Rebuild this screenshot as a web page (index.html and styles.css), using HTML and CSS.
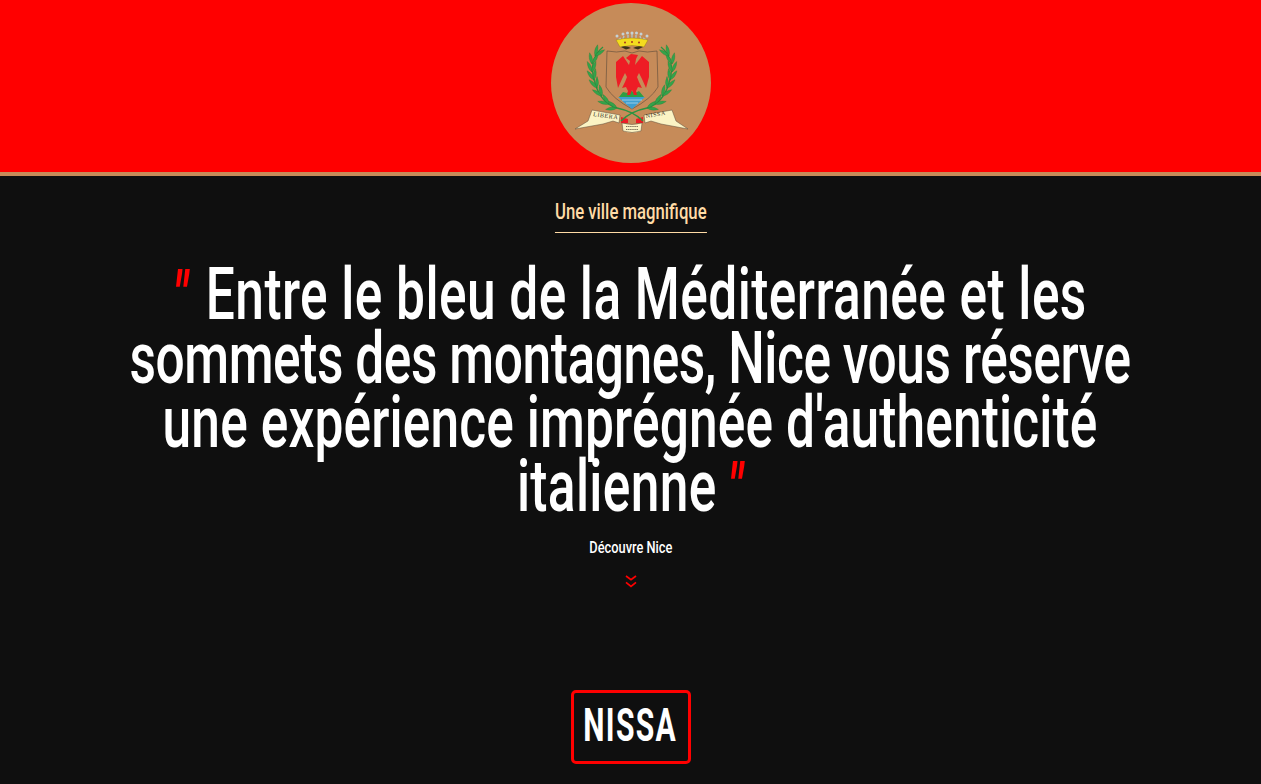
FILE: index.html
```html
<!DOCTYPE html>
<html lang="fr">
<head>
  <meta charset="UTF-8" />
  <meta name="viewport" content="width=device-width,initial-scale=1.0" />
  <title>Nissa</title>
  <link rel="stylesheet" href="styles.css">
</head>
<body>
  <header class="top">
    <div class="logo">
      <svg viewBox="0 0 160 160" width="160" height="160">
        <defs>
          <path id="leaf" d="M0 0 Q5 -3 11.5 0 Q5 3 0 0Z" fill="#34a34a" stroke="#1d7c35" stroke-width=".3"/>
          <g id="branch">
            <path d="M92 118 C84 110 76 107 66 105 C56 102 48 94 44 80 C40 68 40 54 52 44" fill="none" stroke="#2b9440" stroke-width="1.3"/>
            <use href="#leaf" transform="translate(66 105) rotate(173)"/>
            <use href="#leaf" transform="translate(66 105) rotate(-143)"/>
            <use href="#leaf" transform="translate(58 101) rotate(-167)"/>
            <use href="#leaf" transform="translate(58 101) rotate(-123)"/>
            <use href="#leaf" transform="translate(51 93) rotate(-147)"/>
            <use href="#leaf" transform="translate(51 93) rotate(-103)"/>
            <use href="#leaf" transform="translate(46 85) rotate(-134)"/>
            <use href="#leaf" transform="translate(46 85) rotate(-90)"/>
            <use href="#leaf" transform="translate(43 77) rotate(-127)"/>
            <use href="#leaf" transform="translate(43 77) rotate(-83)"/>
            <use href="#leaf" transform="translate(41 69) rotate(-114)"/>
            <use href="#leaf" transform="translate(41 69) rotate(-70)"/>
            <use href="#leaf" transform="translate(41 61) rotate(-102)"/>
            <use href="#leaf" transform="translate(41 61) rotate(-58)"/>
            <use href="#leaf" transform="translate(44 53) rotate(-77)"/>
            <use href="#leaf" transform="translate(44 53) rotate(-33)"/>
          </g>
        </defs>
        <path d="M41 107 L69 112 L68 120 L62 118 L52 121 L24 126 L37 118Z" fill="#fbf3c4" stroke="#5b4a3a" stroke-width=".5"/>
        <path d="M121 107 L93 112 L94 120 L100 118 L110 121 L137 126 L125 118Z" fill="#fbf3c4" stroke="#5b4a3a" stroke-width=".5"/>
        <path d="M70 114 L77 116 V120 L70 120Z M92 114 L85 116 V120 L92 120Z" fill="#ee1c25"/>
        <path d="M71 120 Q81 123 91 120 L90 128 Q81 131 72 128Z" fill="#fbf3c4" stroke="#5b4a3a" stroke-width=".5"/>
        <path d="M75 123.5 H87 M75 126.5 H87" stroke="#6b604a" stroke-width=".9" stroke-dasharray="1.4 .7"/>
        <use href="#branch"/>
        <use href="#branch" transform="translate(162 0) scale(-1 1)"/>
        <path d="M56 48 Q66 50 74 48 L81 50 L88 48 Q96 50 106 48 L107 84 Q100 96 81 106 Q62 96 55 84Z" fill="#c68b59" stroke="#5b4a3a" stroke-width=".6"/>
        <path d="M68 94 L72 89 L76 90 L79 87 L84 90 L88 88 L93 94Z" fill="#2f9e44"/>
        <path d="M67 94 H94 Q88 100 81 106 Q73 100 67 94Z" fill="#3f9fd0"/>
        <path d="M71 97 H91 M75 100 H87" stroke="#d9eef7" stroke-width=".6"/>
        <path d="M80 51 L87 52 L85 56 L84 62 L91 53 L98 59 L98 74 L95 85 L91 76 L88 70 L86 74 L88 79 L91 85 L87 84 L85 88 L86 92 H83 L81 87 L79 92 H76 L77 88 L75 84 L71 85 L74 79 L76 74 L74 70 L71 76 L67 85 L65 74 L65 59 L72 53 L78 62 L79 58 L75 55Z" fill="#ee1c25"/>
        <path d="M67 37 L70 35 M72 36 L73 33 M77 35 L77 32 M81 35 V31 M85 35 L85 32 M90 36 L89 33 M95 37 L92 35" stroke="#b4c2c6" stroke-width="1.4"/>
        <g fill="#c5d2d6"><circle cx="66" cy="33" r="1.5"/><circle cx="72" cy="31" r="1.5"/><circle cx="76.500" cy="30" r="1.5"/><circle cx="81" cy="30" r="1.5"/><circle cx="85.500" cy="30" r="1.5"/><circle cx="90" cy="31" r="1.5"/><circle cx="96" cy="33" r="1.5"/></g>
        <path d="M65 37 Q81 33 97 37 L93 44 Q81 41 69 44Z" fill="#f4dc1e" stroke="#8a7414" stroke-width=".4"/>
        <g fill="#a8361f"><circle cx="74" cy="39.500" r="1"/><circle cx="81" cy="39" r="1"/><circle cx="88" cy="39.500" r="1"/></g>
        <path d="M70 44 Q75 42 80 45 L75 46.500Z M92 44 Q87 42 82 45 L87 46.500Z" fill="#3b3418"/>
        <text class="motto" x="42" y="113" transform="rotate(8 42 113)">LIBERA</text>
        <text class="motto" x="95" y="115" transform="rotate(-9 95 115)">NISSA</text>
      </svg>
    </div>
  </header>

  <main class="intro">
    <h2 class="kicker">Une ville magnifique</h2>
    <h1 class="quote">
      <span class="line-one"><span class="mark">"</span> Entre le bleu de la Méditerranée et les</span><br>
      <span class="line-two">sommets des montagnes, Nice vous réserve</span><br>
      <span class="line-three">une expérience imprégnée d'authenticité</span><br>
      <span class="line-four">italienne <span class="mark">"</span></span>
    </h1>
    <a class="more" href="#nissa">Découvre Nice</a>
    <svg class="chevrons" viewBox="0 0 14 14" width="14" height="14">
      <path d="M2 2 L7 5.800 L12 2 M2 8.300 L7 12.500 L12 8.300" fill="none" stroke="#f00" stroke-width="1.7"/>
    </svg>
    <div class="brand" id="nissa"><span class="brand-name">NISSA</span></div>
  </main>
</body>
</html>
```

FILE: styles.css
```css
* { box-sizing: border-box; }
html, body { overflow-x: hidden; }
body {
  margin: 0;
  background: #0f0f0f;
  color: #fff;
  font-family: Roboto, "Liberation Sans", sans-serif;
}
.top {
  background: #f00;
  border-bottom: 4px solid #c68b59;
  height: 176px;
  display: flex;
  justify-content: center;
  padding-top: 3px;
}
.logo {
  width: 160px;
  height: 160px;
  border-radius: 50%;
  background: #c68b59;
}
.motto {
  font-family: "Liberation Serif", serif;
  font-size: 6px;
  letter-spacing: .6px;
  fill: #3a3222;
}
.intro {
  display: flex;
  flex-direction: column;
  align-items: center;
  padding-top: 23px;
}
/* no condensed font here, so the text is squeezed sideways */
.kicker {
  margin: 0;
  font-size: 22px;
  font-weight: 500;
  line-height: 26px;
  color: #ffdba6;
  padding-bottom: 7px;
  border-bottom: 1px solid #ffdba6;
  white-space: nowrap;
  transform: scaleX(.76);
}
.quote {
  margin: 30px 0 0;
  font-size: 72px;
  font-weight: 500;
  line-height: 64px;
  text-align: center;
  white-space: nowrap;
  transform: scaleX(.715);
}
.line-one { letter-spacing: .59px; }
.line-two { letter-spacing: -.63px; }
.line-three { letter-spacing: .17px; }
.line-four { letter-spacing: .45px; }
.mark {
  color: #f00;
  font-size: 66px;
  font-style: italic;
  font-weight: 700;
  line-height: 0;
  margin-right: 6px;
}
.line-four .mark { margin: 0 0 0 -2px; }
.more {
  margin-top: 19px;
  font-size: 16px;
  font-weight: 500;
  line-height: 20px;
  color: #fff;
  text-decoration: none;
  white-space: nowrap;
  transform: scaleX(.8);
}
.chevrons { margin-top: 16px; }
.brand {
  margin-top: 102px;
  width: 120px;
  height: 74px;
  padding-bottom: 6px;
  border: 3px solid #f00;
  border-radius: 5px;
  display: flex;
  align-items: center;
  justify-content: center;
}
.brand-name {
  font-size: 47px;
  font-weight: 700;
  letter-spacing: 2px;
  transform: scaleX(.64);
}
```
